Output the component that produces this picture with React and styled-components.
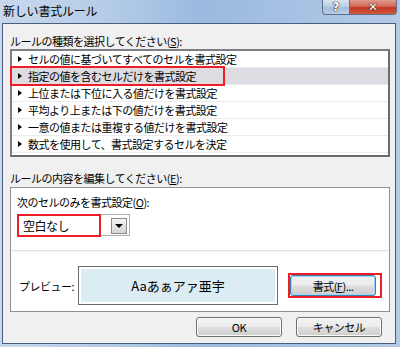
import React from 'react'
import styled, { createGlobalStyle } from 'styled-components'

const GlobalStyle = createGlobalStyle`
  body {
    margin: 0;
    font-family: "Noto Sans CJK JP", "Noto Sans", sans-serif;
    color: #000;
  }
`

const Window = styled.div`
  width: 400px;
  height: 347px;
  display: flex;
  flex-direction: column;
  background: linear-gradient(90deg, #c8d9ed 0%, #b3cbe7 28%, #9bbadf 50%, #a5c0e2 72%, #b2cae6 100%);
  overflow: hidden;
`

const TitleBar = styled.div`
  height: 23px;
  display: flex;
  align-items: flex-start;
  flex-shrink: 0;
`

const Title = styled.div`
  padding: 4px 0 0 3px;
  font-size: 12px;
  line-height: 14px;
  letter-spacing: -0.2px;
`

const Caption = styled.div`
  margin-left: auto;
  margin-right: 3px;
  display: flex;
`

const CapButton = styled.div`
  width: ${({ w }) => w}px;
  height: 15px;
  box-sizing: border-box;
  border: 1px solid #5d6f8a;
  border-top: none;
  display: flex;
  align-items: center;
  justify-content: center;
  color: #fff;
  font: bold 12px "DejaVu Sans", sans-serif;
  text-shadow: 0 0 1px #222, 0 0 1px #222, 0 0 1px #222;
  background: ${({ red }) =>
    red
      ? 'linear-gradient(#e39a8f 0%, #d46a5a 45%, #c2351f 55%, #d0583f 100%)'
      : 'linear-gradient(#d6e3f1 0%, #bccfe6 45%, #a6bcd8 55%, #b8cde6 100%)'};
  border-radius: ${({ red }) => (red ? '0 0 4px 0' : '0 0 0 4px')};
  border-left: ${({ red }) => (red ? 'none' : '1px solid #5d6f8a')};
`

const Body = styled.div`
  flex: 1;
  margin: 0 4px 3px 2px;
  border: 1px solid #4a5d80;
  background: #f0f0f0;
  display: flex;
  flex-direction: column;
  padding: 0 5px 0 7px;
  font-size: 11px;
  letter-spacing: -0.5px;
`

const Label = styled.div`
  height: 14px;
  line-height: 14px;
  margin-top: ${({ top }) => top}px;
  margin-bottom: ${({ bottom }) => bottom}px;
  padding-left: ${({ indent }) => indent || 0}px;
`

const ListBox = styled.div`
  height: 108px;
  box-sizing: border-box;
  border: 2px solid #7d7f84;
  border-right-color: #6a6c70;
  border-bottom-color: #6a6c70;
  background: #fff;
  display: flex;
  flex-direction: column;
`

const Row = styled.div`
  position: relative;
  height: 17px;
  box-sizing: border-box;
  border-bottom: 1px solid #ececec;
  display: flex;
  align-items: center;
  padding-left: 6px;
  background: ${({ selected }) => (selected ? '#dcdce2' : 'transparent')};
`

const Bullet = styled.span`
  width: 0;
  height: 0;
  border-left: 4px solid #000;
  border-top: 3px solid transparent;
  border-bottom: 3px solid transparent;
  margin-right: 6px;
`

const Highlight = styled.div`
  position: absolute;
  left: ${({ l }) => l}px;
  top: ${({ t }) => t}px;
  width: ${({ w }) => w}px;
  height: ${({ h }) => h}px;
  box-sizing: border-box;
  border: 2px solid #ee1c24;
  pointer-events: none;
`

const Group = styled.div`
  height: 125px;
  box-sizing: border-box;
  border: 1px solid #8f9092;
  background: #fff;
  display: flex;
  flex-direction: column;
`

const Combo = styled.div`
  position: relative;
  margin: 5px 0 0 6px;
  width: 113px;
  height: 22px;
  box-sizing: border-box;
  border: 1px solid #abadb3;
  display: flex;
  align-items: center;
  padding: 0 1px 0 5px;
  font-size: 12px;
`

const ComboText = styled.span`
  flex: 1;
`

const DropButton = styled.div`
  width: 16px;
  height: 16px;
  box-sizing: border-box;
  border: 1px solid #8a8a8a;
  background: linear-gradient(#f4f4f4, #d4d4d4);
  display: flex;
  align-items: center;
  justify-content: center;
  margin-right: 1px;
  margin-top: 2px;
`

const DownArrow = styled.span`
  width: 0;
  height: 0;
  border-top: 4px solid #000;
  border-left: 4px solid transparent;
  border-right: 4px solid transparent;
`

const Separator = styled.div`
  margin: 14px 1px 0;
  height: 1px;
  border-bottom: 1px solid #f4f4f4;
  background: #e0e0e0;
`

const PreviewRow = styled.div`
  margin-top: 14px;
  padding-left: 8px;
  display: flex;
  align-items: center;
`

const PreviewLabel = styled.div`
  width: 59px;
`

const PreviewBox = styled.div`
  width: 200px;
  height: 39px;
  box-sizing: border-box;
  border: 1px solid #6b6b6b;
  padding: 2px;
  background: #fff;
`

const PreviewFill = styled.div`
  height: 100%;
  background: #dbecf2;
  display: flex;
  align-items: center;
  justify-content: center;
  font-size: 13px;
  letter-spacing: 0;
`

const FormatWrap = styled.div`
  position: relative;
  margin-left: 10px;
  width: 94px;
  height: 25px;
  padding: 2px 0 0 2px;
  box-sizing: border-box;
`

const Button = styled.div`
  width: ${({ w }) => w}px;
  height: ${({ h }) => h || 20}px;
  box-sizing: border-box;
  border: 1px solid ${({ focused }) => (focused ? '#3c7fb1' : '#707070')};
  border-radius: 3px;
  box-shadow: ${({ focused }) => (focused ? 'inset 0 0 0 1px #9fd6f4' : 'inset 0 0 0 1px #fbfbfb')};
  background: linear-gradient(#f2f2f2 0%, #ebebeb 48%, #dddddd 52%, #cfcfcf 100%);
  display: flex;
  align-items: center;
  justify-content: center;
  font-size: 11px;
`

const Footer = styled.div`
  margin-top: 5px;
  padding-right: 8px;
  display: flex;
  justify-content: flex-end;
  gap: 14px;
`

const rules = [
  'セルの値に基づいてすべてのセルを書式設定',
  '指定の値を含むセルだけを書式設定',
  '上位または下位に入る値だけを書式設定',
  '平均より上または下の値だけを書式設定',
  '一意の値または重複する値だけを書式設定',
  '数式を使用して、書式設定するセルを決定',
]

export default function App() {
  return (
    <>
      <GlobalStyle />
      <Window>
        <TitleBar>
          <Title>新しい書式ルール</Title>
          <Caption>
            <CapButton w={28}>?</CapButton>
            <CapButton w={47} red>✕</CapButton>
          </Caption>
        </TitleBar>
        <Body>
          <Label top={10} bottom={1}>ルールの種類を選択してください(<u>S</u>):</Label>
          <ListBox>
            {rules.map((r, i) => (
              <Row key={r} selected={i === 1}>
                <Bullet />
                {r}
                {i === 1 && <Highlight l={-2} t={-2} w={215} h={20} />}
              </Row>
            ))}
          </ListBox>
          <Label top={14} bottom={2}>ルールの内容を編集してください(<u>E</u>):</Label>
          <Group>
            <Label top={7} indent={6}>次のセルのみを書式設定(<u>O</u>):</Label>
            <Combo>
              <ComboText>空白なし</ComboText>
              <DropButton><DownArrow /></DropButton>
              <Highlight l={-1} t={-1} w={84} h={23} />
            </Combo>
            <Separator />
            <PreviewRow>
              <PreviewLabel>プレビュー:</PreviewLabel>
              <PreviewBox>
                <PreviewFill>Aaあぁアァ亜宇</PreviewFill>
              </PreviewBox>
              <FormatWrap>
                <Button w={86} h={21} focused>書式(<u>F</u>)...</Button>
                <Highlight l={0} t={0} w={94} h={25} />
              </FormatWrap>
            </PreviewRow>
          </Group>
          <Footer>
            <Button w={86}>OK</Button>
            <Button w={86}>キャンセル</Button>
          </Footer>
        </Body>
      </Window>
    </>
  )
}
